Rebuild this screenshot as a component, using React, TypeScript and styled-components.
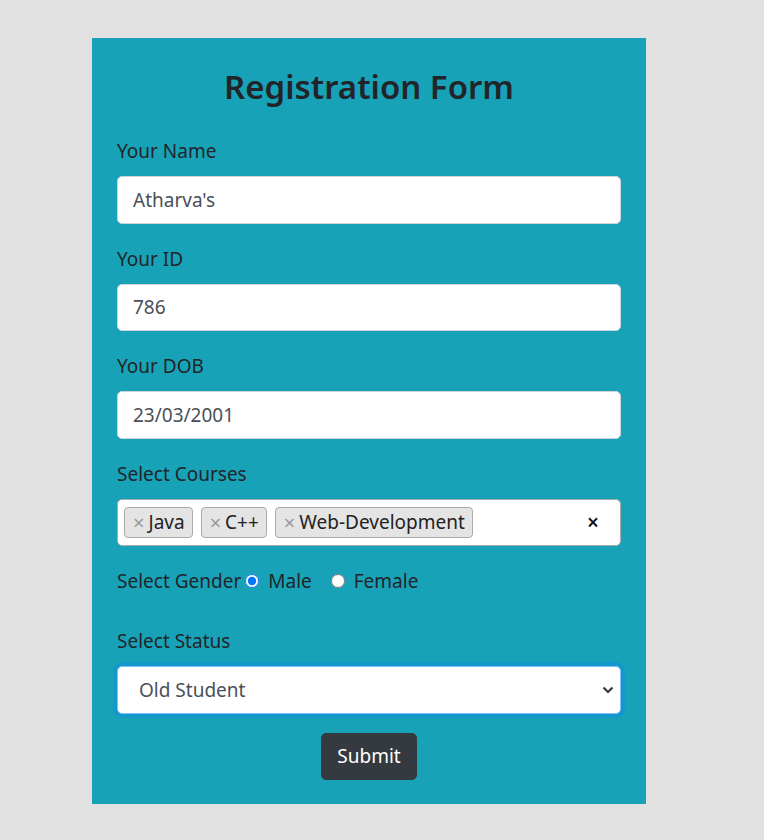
import React from "react";
import styled, { createGlobalStyle } from "styled-components";

const GlobalStyle = createGlobalStyle`
  html, body {
    margin: 0;
    padding: 0;
    background: #e1e1e1;
  }
  body {
    font-family: "Noto Sans", "Open Sans", sans-serif;
    color: #212529;
  }
`;

const Page = styled.div`
  padding: 38px 0 36px 92px;
`;

const Card = styled.form`
  width: 554px;
  box-sizing: border-box;
  padding: 25px 25px 24px;
  background-color: #18a2b8;
`;

const Title = styled.h2`
  margin: 0 0 25px;
  font-size: 33px;
  line-height: 48px;
  font-weight: 600;
  text-align: center;
  color: #212529;
`;

const Group = styled.div<{ $gap?: number }>`
  margin-bottom: ${(p) => p.$gap ?? 20}px;
`;

const Label = styled.label`
  display: block;
  margin-bottom: 10px;
  font-size: 19px;
  line-height: 30px;
  color: #212529;
`;

const Input = styled.input`
  display: block;
  width: 100%;
  height: 47.5px;
  box-sizing: border-box;
  padding: 0 15px;
  font-family: inherit;
  font-size: 19px;
  color: #495057;
  background: #fff;
  border: 1px solid #ced4da;
  border-radius: 5px;
  outline: none;
`;

const Multi = styled.div`
  display: flex;
  align-items: center;
  gap: 8px;
  height: 47.5px;
  box-sizing: border-box;
  padding: 0 6px;
  background: #fff;
  border: 1px solid #aaa;
  border-radius: 5px;
`;

const Chip = styled.span`
  display: inline-flex;
  align-items: center;
  gap: 4px;
  height: 31px;
  box-sizing: border-box;
  padding: 0 7px 0 8px;
  background: #e4e4e4;
  border: 1px solid #aaa;
  border-radius: 4px;
  font-size: 19px;
  color: #222;
`;

const ChipX = styled.span`
  color: #999;
  font-size: 20px;
  font-weight: 400;
`;

const ClearX = styled.span`
  margin-left: auto;
  margin-right: 15px;
  font-size: 21px;
  font-weight: 600;
  color: #111;
`;

const RadioRow = styled.div`
  display: flex;
  align-items: center;
  font-size: 19px;
  line-height: 30px;
  color: #212529;
`;

const RadioLabel = styled.label`
  display: inline-flex;
  align-items: center;
  margin-left: 4px;
  margin-right: 15px;
`;

const Radio = styled.input`
  width: 14px;
  height: 14px;
  margin: 0 9px 0 0;
  accent-color: #0075ff;
`;

const SelectWrap = styled.div`
  position: relative;
`;

const Select = styled.select`
  display: block;
  width: 100%;
  height: 47.5px;
  box-sizing: border-box;
  padding: 0 32px 0 21px;
  font-family: inherit;
  font-size: 19px;
  color: #495057;
  background: #fff;
  border: 1px solid #80bdff;
  border-radius: 5px;
  box-shadow: 0 0 0 4px rgba(0, 123, 255, 0.25);
  appearance: none;
  outline: none;
`;

const Chevron = styled.svg`
  position: absolute;
  right: 6px;
  top: 50%;
  margin-top: -5px;
  pointer-events: none;
`;

const Actions = styled.div`
  display: flex;
  justify-content: center;
  margin-top: 19px;
`;

const Button = styled.button`
  height: 47.5px;
  padding: 0 15px;
  font-family: inherit;
  font-size: 19px;
  color: #fff;
  background-color: #343a40;
  border: 1px solid #343a40;
  border-radius: 5px;
`;

const courses = ["Java", "C++", "Web-Development"];

export default function App() {
  return (
    <Page>
      <GlobalStyle />
      <Card onSubmit={(e) => e.preventDefault()}>
        <Title>Registration Form</Title>
        <Group>
          <Label>Your Name</Label>
          <Input defaultValue="Atharva's" />
        </Group>
        <Group>
          <Label>Your ID</Label>
          <Input defaultValue="786" />
        </Group>
        <Group>
          <Label>Your DOB</Label>
          <Input defaultValue="23/03/2001" />
        </Group>
        <Group>
          <Label>Select Courses</Label>
          <Multi>
            {courses.map((c) => (
              <Chip key={c}>
                <ChipX>×</ChipX>
                {c}
              </Chip>
            ))}
            <ClearX>×</ClearX>
          </Multi>
        </Group>
        <Group $gap={30}>
          <RadioRow>
            Select Gender
            <RadioLabel>
              <Radio type="radio" name="gender" defaultChecked />
              Male
            </RadioLabel>
            <RadioLabel>
              <Radio type="radio" name="gender" />
              Female
            </RadioLabel>
          </RadioRow>
        </Group>
        <Group $gap={0}>
          <Label>Select Status</Label>
          <SelectWrap>
            <Select defaultValue="old">
              <option value="old">Old Student</option>
              <option value="new">New Student</option>
            </Select>
            <Chevron width="14" height="10" viewBox="0 0 14 10">
              <path d="M2.5 2.5 L7 7 L11.5 2.5" fill="none" stroke="#343a40" strokeWidth="2.2" />
            </Chevron>
          </SelectWrap>
        </Group>
        <Actions>
          <Button type="submit">Submit</Button>
        </Actions>
      </Card>
    </Page>
  );
}
